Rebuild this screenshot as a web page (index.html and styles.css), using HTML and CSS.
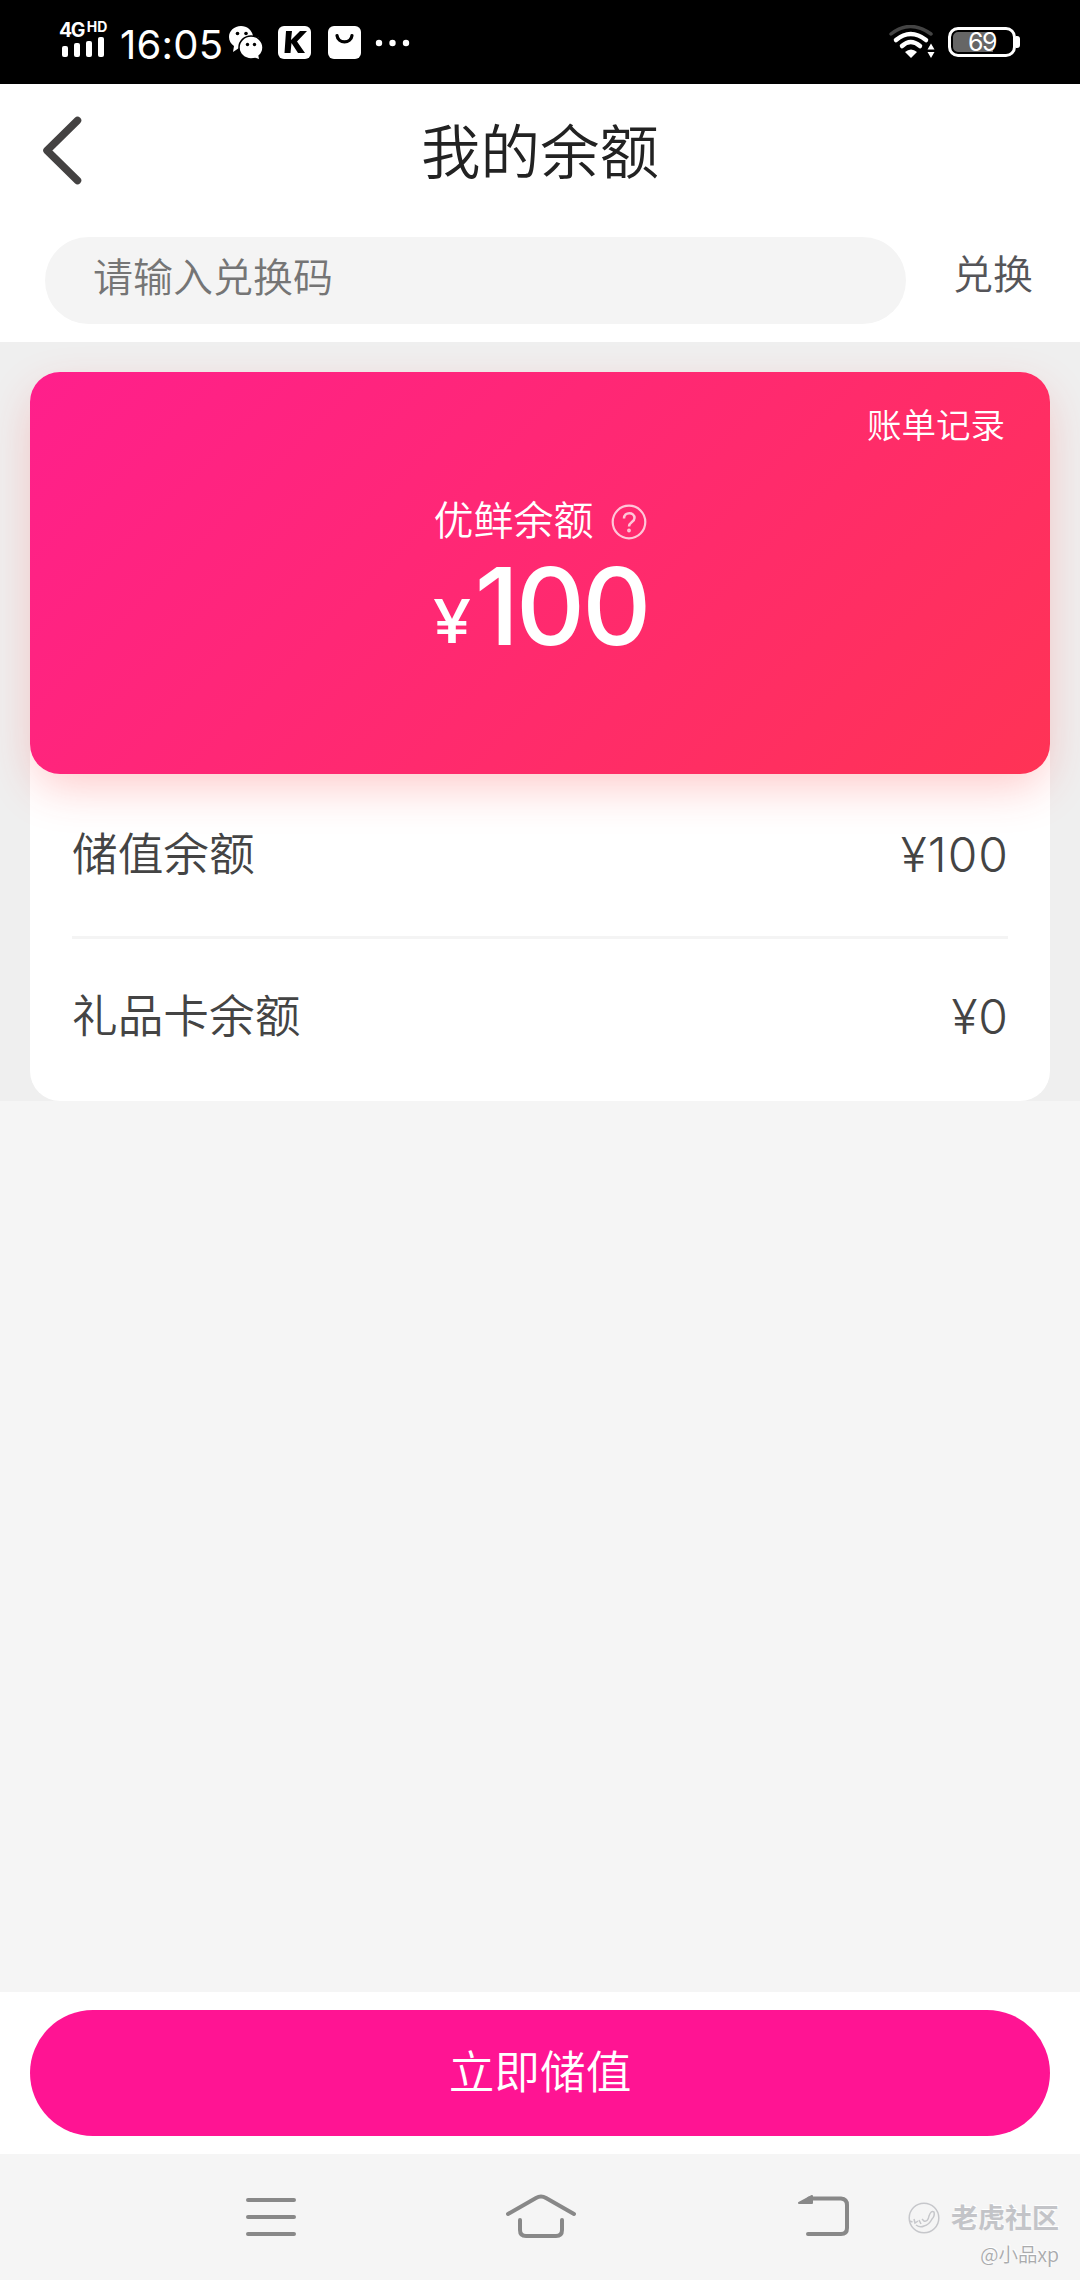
FILE: index.html
```html
<!DOCTYPE html>
<html lang="zh-CN">
<head>
<meta charset="utf-8">
<title>我的余额</title>
<link rel="stylesheet" href="styles.css">
</head>
<body>
<div class="screen">
  <div class="status">
    <div class="signal">
      <div class="net"><span class="net-g">4G</span><span class="net-hd">HD</span></div>
      <svg class="bars" width="44" height="20" viewBox="0 0 44 20" fill="#fff"><rect x="0" y="9" width="6" height="11" rx="2"/><rect x="12" y="6" width="6" height="14" rx="2"/><rect x="24" y="4" width="6" height="16" rx="2"/><rect x="36" y="0" width="6" height="20" rx="2"/></svg>
    </div>
    <span class="time">16:05</span>
    <svg class="notes" width="184" height="34" viewBox="0 0 184 34">
      <g fill="#fff">
        <path d="M12 0C5 0 0 5 0 11c0 4 2 7 5 9l-1 6 6-4h4L24 10C23 4 18 0 12 0z"/>
        <ellipse cx="22" cy="21.500" rx="12" ry="11.500" stroke="#000" stroke-width="1.500"/>
        <path d="M24 31l6 2-1-5z"/>
        <rect x="49" y="0" width="33" height="33" rx="6"/>
        <rect x="99" y="0" width="33" height="33" rx="6"/>
        <circle cx="150" cy="17" r="3.200"/><circle cx="163.500" cy="17" r="3.200"/><circle cx="177" cy="17" r="3.200"/>
      </g>
      <g fill="#000"><circle cx="8.500" cy="7.500" r="1.800"/><circle cx="17" cy="7.500" r="1.800"/><circle cx="18.500" cy="18.500" r="1.700"/><circle cx="25.500" cy="18.500" r="1.700"/>
        <path d="M57 5h6l-1 9L71 5h7L68 15.500 76 27h-7l-6.500-10-1 10h-6z"/></g>
      <path d="M108 9.500c1 8.500 14 8.500 15 0" fill="none" stroke="#000" stroke-width="3.200" stroke-linecap="round"/>
    </svg>
    <svg class="wifi" width="48" height="34" viewBox="0 0 48 34" fill="none" stroke-linecap="round" stroke-width="4">
      <path d="M3 9Q22-6 43 9" stroke="#444" stroke-width="3.500"/>
      <path d="M8 15Q22.500 3 38 15M14 21Q22.500 13 32 21" stroke="#fff" stroke-width="4.500"/>
      <path d="M17 27q6-5 12 0l-6 6z" fill="#fff"/><path d="M39.500 24.500l3.500-6 3.500 6zM39.500 27l3.500 6 3.500-6z" fill="#fff"/>
    </svg>
    <div class="battery"><div class="cell"><span>69</span></div><i class="tip"></i></div>
  </div>

  <div class="header">
    <svg class="back" width="42" height="70" viewBox="0 0 42 70"><path d="M35.500 5.500L5 35.500l30.500 30" fill="none" stroke="#444242" stroke-width="7.500" stroke-linecap="round" stroke-linejoin="round"/></svg>
    <h1 class="title">我的余额</h1>
  </div>
  <div class="redeem">
    <div class="field">请输入兑换码</div>
    <div class="redeem-btn">兑换</div>
  </div>

  <div class="wallet">
    <div class="panel">
      <div class="card">
        <div class="bill">账单记录</div>
        <div class="label"><span>优鲜余额</span>
          <svg width="36" height="36" viewBox="0 0 36 36" fill="none" stroke="#ffc6d8" stroke-width="2.200"><circle cx="18" cy="18" r="16.300"/><path d="M13 14.500c0-7 10.500-7 10.500-.5 0 4-5.500 4-5.500 8.500" stroke-width="2.500"/><circle cx="18" cy="26.500" r=".8"/></svg>
        </div>
        <div class="total"><span class="yen">¥</span><span class="sum">100</span></div>
      </div>
      <div class="rows">
        <div class="row"><span class="name">储值余额</span><span class="amount">¥100</span></div>
        <div class="row"><span class="name">礼品卡余额</span><span class="amount">¥0</span></div>
      </div>
    </div>
  </div>

  <div class="bottom"><div class="topup">立即储值</div></div>
  <div class="nav">
    <svg class="keys" width="620" height="50" viewBox="240 2190 620 50" fill="none" stroke="#888" stroke-width="4" stroke-linecap="round" stroke-linejoin="round">
      <path d="M248 2200h46M248 2217h46M248 2234h46"/>
      <path d="M508 2214l28-16q5-3 10 0l28 16M520 2220v10q0 6 6 6h30q6 0 6-6v-10"/>
      <path d="M808 2234h33q6 0 6-6v-23q0-6-6-6.500H809"/><path d="M799 2203l13-7v7z" stroke-width="2" fill="#888"/>
    </svg>
    <div class="mark">
      <div class="brand">
        <svg width="32" height="32" viewBox="0 0 32 32" fill="none" stroke="#c6c7cb" stroke-width="1.500"><circle cx="16" cy="16" r="14.800"/><path d="M1.500 19l3 1M6 17l1 4 3-2M11 18l2 4M14 17l2 2q4 1 5-5 2-6 5-4 1 4-2 7-3 6-8 7-4 2-8-1"/></svg>
        <span>老虎社区</span>
      </div>
      <div class="author">@小品xp</div>
    </div>
  </div>
</div>
</body>
</html>
```
FILE: styles.css
```css
* { box-sizing: border-box; }
body { margin: 0; font-family: "Noto Sans CJK SC", sans-serif; font-weight: 350; background: #f5f5f5; }
svg { display: block; flex: none; }
.screen { width: 1080px; height: 2280px; display: flex; flex-direction: column; overflow: hidden; }

.status { height: 84px; flex: none; background: #000; color: #fff; display: flex; align-items: flex-start; padding: 0 60px; font-family: Inter, sans-serif; }
.signal { width: 60px; padding-top: 20px; }
.net { height: 17px; display: flex; align-items: flex-start; gap: 3px; font-weight: 700; }
.net-g { font-size: 19.500px; line-height: 21px; letter-spacing: -1.500px; font-weight: 700; margin-left: -1px; }
.net-hd { font-size: 14px; line-height: 14px; }
.bars { margin-left: 2px; }
.time { width: 109px; font-size: 40px; line-height: 48px; padding-top: 21px; font-weight: 400; letter-spacing: .2px; white-space: nowrap; }
.notes { margin-top: 26px; }
.wifi { margin: 25px 12px 0 auto; }
.battery { display: flex; align-items: center; margin-top: 27px; }
.cell { width: 68px; height: 30px; border: 3px solid #fff; border-radius: 10px; box-shadow: inset 0 0 0 2px #000; background: linear-gradient(90deg, #666 42px, #000 42px); display: flex; align-items: center; justify-content: center; font-size: 25px; line-height: 24px; font-weight: 400; letter-spacing: -1.500px; }
.tip { width: 4px; height: 12px; background: #fff; border-radius: 0 3px 3px 0; }

.header { height: 128px; flex: none; background: #fff; display: grid; grid-template-columns: 1fr auto 1fr; align-items: center; padding: 0 42px; }
.back { margin-top: 4px; }
.title { margin: 0; font-size: 59.500px; line-height: 80px; font-weight: 350; color: #222; }

.redeem { height: 130px; flex: none; background: #fff; display: flex; padding: 25px 45px 18px; }
.field { width: 861px; height: 87px; border-radius: 44px; background: #f4f4f4; color: #757575; font-size: 40px; line-height: 76px; padding-left: 48px; }
.redeem-btn { margin-left: auto; font-size: 40px; line-height: 70px; color: #555559; margin-right: 2px; }

.wallet { flex: none; height: 759px; background: #efefef; padding: 30px 30px 0; }
.panel { height: 729px; border-radius: 30px; background: #fff; }
.card { height: 402px; border-radius: 30px; background: linear-gradient(135deg, #ff1f8c, #ff3355); box-shadow: 0 17px 46px -5px rgba(255, 55, 55, .27); color: #fff; display: flex; flex-direction: column; align-items: center; padding: 27px 44px 0; }
.bill { align-self: flex-end; font-size: 34.500px; line-height: 48px; margin-right: 1px; }
.label { display: flex; align-items: center; gap: 17px; margin-top: 38px; height: 66px; font-size: 40px; line-height: 60px; }
.label svg { margin-top: 8px; }
.total { display: flex; align-items: baseline; height: 110px; font-family: Inter, sans-serif; line-height: 110px; }
.yen { font-size: 61px; font-weight: 500; margin-right: 6px; transform: translateY(-2px) scaleX(1.12); }
.sum { font-size: 107px; font-weight: 550; letter-spacing: -3px; margin-right: -3px; }

.rows { padding: 0 42px; }
.row { height: 162px; display: flex; align-items: center; justify-content: space-between; color: #444; font-size: 45.700px; line-height: 60px; }
.row + .row { border-top: 3px solid #f4f4f4; }
.name { margin-bottom: 8px; }
.amount { font-family: Inter, sans-serif; font-size: 48px; font-weight: 300; letter-spacing: 1px; margin-right: -1px; }
.row + .row .amount, .row + .row .name { margin-top: -3px; }

.bottom { margin-top: auto; flex: none; height: 162px; background: #fff; padding: 18px 30px; }
.topup { height: 126px; border-radius: 63px; background: #ff1493; color: #fff; text-align: center; font-size: 45.700px; line-height: 118px; }

.nav { height: 126px; flex: none; display: flex; padding: 36px 21px 0 240px; }
.mark { margin-left: auto; color: #c3c4c8; display: flex; flex-direction: column; align-items: flex-end; padding-top: 12px; text-shadow: 1px -1px 0 #fff; }
.brand { display: flex; align-items: center; gap: 11px; font-size: 27px; line-height: 32px; font-weight: 700; }
.brand span { position: relative; top: -1px; }
.author { font-size: 19.500px; line-height: 30px; margin-top: 5px; color: #aaabad; }
```
